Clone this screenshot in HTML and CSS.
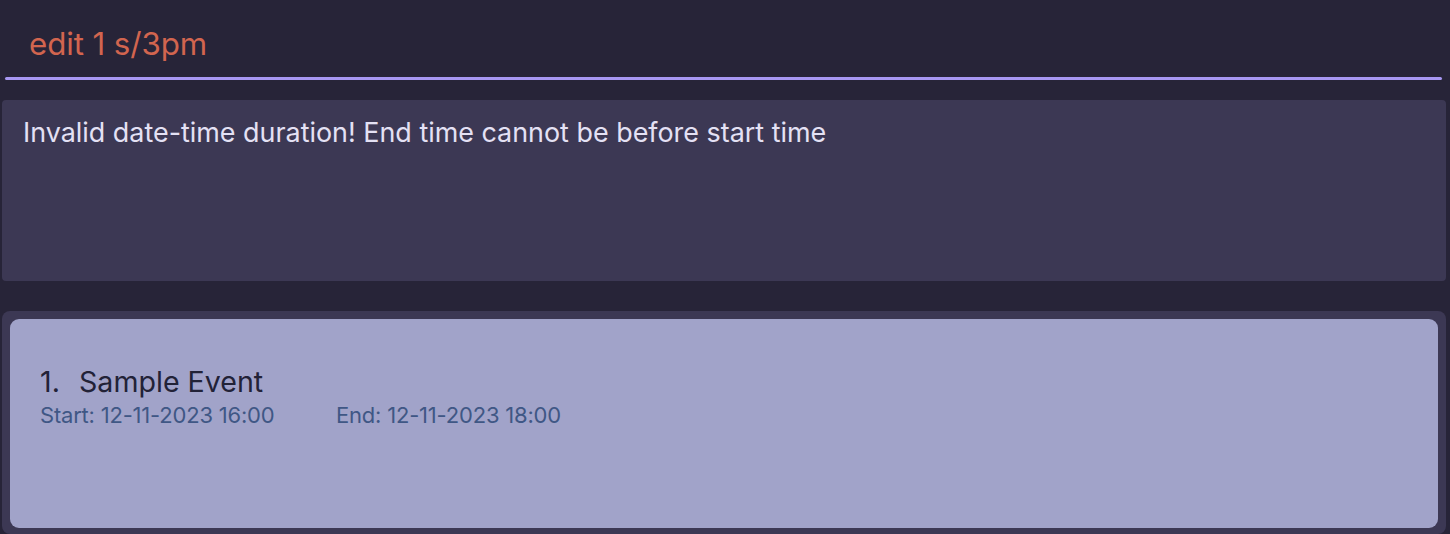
FILE: index.html
```html
<!DOCTYPE html>
<html>
<head>
<meta charset="utf-8">
<link rel="stylesheet" href="styles.css">
</head>
<body>
<div class="app">
  <div class="command">
    <div class="command-text">edit 1 s/3pm</div>
    <div class="command-line"></div>
  </div>
  <div class="result">Invalid date-time duration! End time cannot be before start time</div>
  <div class="list">
    <div class="card">
      <div class="title"><span class="idx">1.</span>Sample Event</div>
      <div class="times">
        <span class="start">Start: 12-11-2023 16:00</span>
        <span class="end">End: 12-11-2023 18:00</span>
      </div>
    </div>
  </div>
</div>
</body>
</html>
```
FILE: styles.css
```css
html, body {
  margin: 0;
  padding: 0;
  background: #272438;
  height: 534px;
  overflow: hidden;
}
.app {
  font-family: Inter, "Noto Sans", sans-serif;
  display: flex;
  flex-direction: column;
  padding: 0 4px 0 2px;
}
.command {
  padding: 0 4px 0 3px;
}
.command-text {
  color: #d2654f;
  font-size: 31.3px;
  line-height: 36px;
  padding: 26px 0 0 24px;
  height: 51px;
  letter-spacing: -0.1px;
}
.command-line {
  height: 3px;
  background: #a797f2;
  border-radius: 2px;
}
.result {
  margin-top: 20px;
  height: 181px;
  background: #3c3854;
  border-radius: 4px;
  color: #e4e1f4;
  font-size: 26.9px;
  line-height: 32px;
  padding: 16px 21px 0;
  box-sizing: border-box;
}
.list {
  margin-top: 30px;
  background: #3c3854;
  border-radius: 8px;
  padding: 8px 8px 0;
  height: 223px;
  box-sizing: border-box;
  overflow: hidden;
}
.card {
  background: #a1a3c9;
  border-radius: 9px;
  height: 209px;
  padding: 47px 30px 0;
  box-sizing: border-box;
}
.title {
  color: #222237;
  font-size: 28.6px;
  line-height: 32px;
}
.idx {
  display: inline-block;
  width: 39px;
}
.times {
  display: flex;
  margin-top: 5px;
  color: #3f5785;
  font-size: 22px;
  line-height: 24px;
  letter-spacing: -0.2px;
}
.start {
  width: 296px;
  flex: none;
}
```
